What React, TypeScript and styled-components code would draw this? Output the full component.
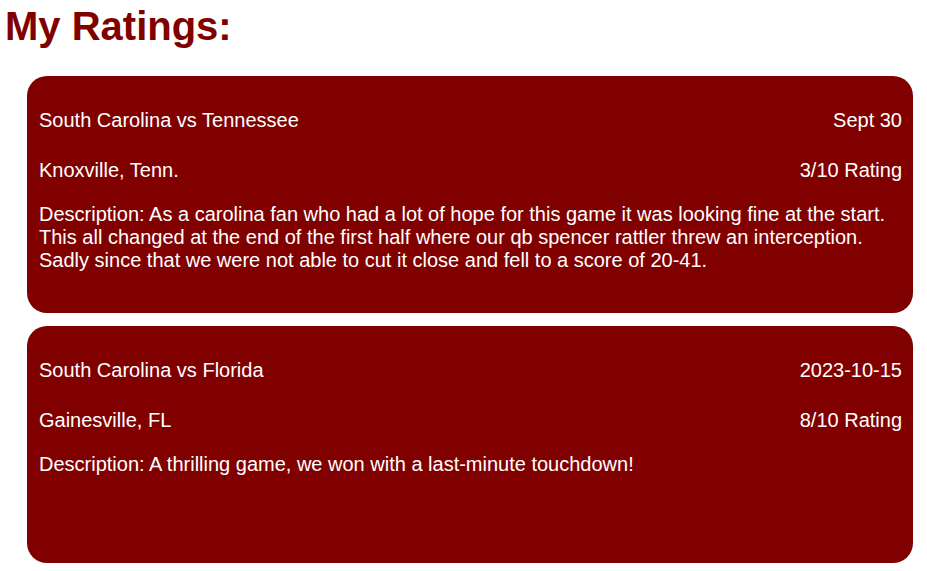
import React from "react";
import styled, { createGlobalStyle } from "styled-components";

const GlobalStyle = createGlobalStyle`
  html, body {
    margin: 0;
    padding: 0;
    background: #ffffff;
    font-family: "Liberation Sans", Arial, sans-serif;
  }
`;

const Page = styled.div`
  padding: 3px 14px 8px 27px;
`;

const Title = styled.h1`
  margin: 0 0 27px -22px;
  font-size: 40px;
  font-weight: bold;
  line-height: 46px;
  color: #800000;
`;

const List = styled.div`
  display: flex;
  flex-direction: column;
  gap: 13px;
`;

const Card = styled.section`
  box-sizing: border-box;
  height: 237px;
  padding: 33px 11px 0 12px;
  background: #800000;
  border-radius: 20px;
  color: #ffffff;
  font-size: 20px;
  line-height: 23px;
`;

const Row = styled.div<{ $gap: number }>`
  display: flex;
  justify-content: space-between;
  margin-top: ${(p) => p.$gap}px;
`;

const Description = styled.p`
  margin: 21px 0 0 0;
`;

type Rating = {
  matchup: string;
  date: string;
  location: string;
  rating: string;
  description: string;
};

const ratings: Rating[] = [
  {
    matchup: "South Carolina vs Tennessee",
    date: "Sept 30",
    location: "Knoxville, Tenn.",
    rating: "3/10 Rating",
    description:
      "Description: As a carolina fan who had a lot of hope for this game it was looking fine at the start. This all changed at the end of the first half where our qb spencer rattler threw an interception. Sadly since that we were not able to cut it close and fell to a score of 20-41.",
  },
  {
    matchup: "South Carolina vs Florida",
    date: "2023-10-15",
    location: "Gainesville, FL",
    rating: "8/10 Rating",
    description: "Description: A thrilling game, we won with a last-minute touchdown!",
  },
];

export default function App() {
  return (
    <>
      <GlobalStyle />
      <Page>
        <Title>My Ratings:</Title>
        <List>
          {ratings.map((r) => (
            <Card key={r.matchup}>
              <Row $gap={0}>
                <span>{r.matchup}</span>
                <span>{r.date}</span>
              </Row>
              <Row $gap={27}>
                <span>{r.location}</span>
                <span>{r.rating}</span>
              </Row>
              <Description>{r.description}</Description>
            </Card>
          ))}
        </List>
      </Page>
    </>
  );
}
